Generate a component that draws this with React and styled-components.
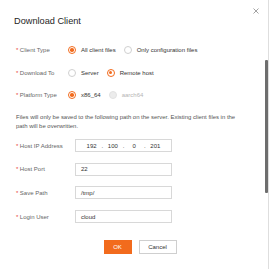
import React from 'react'
import styled, { createGlobalStyle } from 'styled-components'

const GlobalStyle = createGlobalStyle`
  body {
    margin: 0;
    background: #ffffff;
    font-family: "Liberation Sans", Arial, sans-serif;
  }
`

const ORANGE = '#f26b1d'

export default function App() {
  return (
    <>
      <GlobalStyle />
      <Dialog>
        <Content>
          <Header>
            <Title>Download Client</Title>
            <Close>
              <svg width="6" height="6" viewBox="0 0 6 6">
                <path d="M0.5 0.5 L5.5 5.5 M5.5 0.5 L0.5 5.5" stroke="#8a8a8a" strokeWidth="0.8" />
              </svg>
            </Close>
          </Header>

          <RadioRows>
            <Row>
              <Label $width={52}><Star>*</Star>Client Type</Label>
              <Option><Radio $checked />All client files</Option>
              <Option><Radio />Only configuration files</Option>
            </Row>
            <Row>
              <Label $width={52}><Star>*</Star>Download To</Label>
              <Option><Radio />Server</Option>
              <Option><Radio $checked />Remote host</Option>
            </Row>
            <Row>
              <Label $width={52}><Star>*</Star>Platform Type</Label>
              <Option><Radio $checked />x86_64</Option>
              <Option $disabled><Radio $disabled />aarch64</Option>
            </Row>
          </RadioRows>

          <Help>
            Files will only be saved to the following path on the server. Existing client files in the
            path will be overwritten.
          </Help>

          <InputRows>
            <Row>
              <Label $width={59}><Star>*</Star>Host IP Address</Label>
              <Input>
                <Seg>192</Seg><Dot>.</Dot>
                <Seg>100</Seg><Dot>.</Dot>
                <Seg>0</Seg><Dot>.</Dot>
                <Seg>201</Seg>
              </Input>
            </Row>
            <Row>
              <Label $width={59}><Star>*</Star>Host Port</Label>
              <Input>22</Input>
            </Row>
            <Row>
              <Label $width={59}><Star>*</Star>Save Path</Label>
              <Input>/tmp/</Input>
            </Row>
            <Row>
              <Label $width={59}><Star>*</Star>Login User</Label>
              <Input>cloud</Input>
            </Row>
          </InputRows>

          <Footer>
            <Button $primary>OK</Button>
            <Button>Cancel</Button>
          </Footer>
        </Content>
        <Track>
          <Thumb />
        </Track>
      </Dialog>
    </>
  )
}

const Dialog = styled.div`
  width: 269px;
  height: 269px;
  display: flex;
  background: #fff;
  overflow: hidden;
`

const Content = styled.div`
  flex: 1;
  padding: 0 0 0 16px;
  display: flex;
  flex-direction: column;
`

const Header = styled.div`
  display: flex;
  justify-content: space-between;
  align-items: flex-start;
  padding: 8px 5px 0 0;
`

const Title = styled.div`
  margin: 7px 0 0 -2px;
  font-size: 9.2px;
  line-height: 12px;
  color: #252525;
`

const Close = styled.div`
  width: 6px;
  height: 6px;
  display: flex;
`

const RadioRows = styled.div`
  display: flex;
  flex-direction: column;
  gap: 9.5px;
  margin-top: 16.5px;
`

const Row = styled.div`
  display: flex;
  align-items: center;
  height: 13px;
`

const Label = styled.div`
  width: ${p => p.$width}px;
  flex-shrink: 0;
  font-size: 6px;
  color: #666;
  white-space: nowrap;
`

const Star = styled.span`
  color: #e8433a;
  margin-right: 1.5px;
`

const Option = styled.div`
  display: flex;
  align-items: center;
  gap: 5px;
  margin-right: 8px;
  font-size: 6px;
  color: ${p => (p.$disabled ? '#b5b5b5' : '#333')};
  white-space: nowrap;
`

const Radio = styled.span`
  width: 8px;
  height: 8px;
  box-sizing: border-box;
  border-radius: 50%;
  border: 1px solid ${p => (p.$checked ? ORANGE : p.$disabled ? '#e2e2e2' : '#d0d0d0')};
  background: ${p => (p.$disabled ? '#ececec' : '#fff')};
  display: flex;
  align-items: center;
  justify-content: center;
  &::after {
    content: '';
    width: 3.5px;
    height: 3.5px;
    border-radius: 50%;
    background: ${p => (p.$checked ? ORANGE : 'transparent')};
  }
`

const Help = styled.div`
  margin-top: 11px;
  width: 226px;
  font-size: 5.95px;
  line-height: 9px;
  color: #555;
`

const InputRows = styled.div`
  display: flex;
  flex-direction: column;
  gap: 10.7px;
  margin-top: 8.5px;
`

const Input = styled.div`
  width: 97px;
  height: 13px;
  box-sizing: border-box;
  border: 1px solid #d8d8d8;
  display: flex;
  align-items: center;
  padding: 0 5px;
  font-size: 6px;
  color: #333;
`

const Seg = styled.span`
  flex: 1;
  text-align: center;
`

const Dot = styled.span`
  width: 0;
  display: flex;
  justify-content: center;
`

const Footer = styled.div`
  display: flex;
  gap: 7px;
  justify-content: center;
  margin-top: 17px;
`

const Button = styled.div`
  height: 14px;
  width: ${p => (p.$primary ? 28 : 38)}px;
  box-sizing: border-box;
  display: flex;
  align-items: center;
  justify-content: center;
  font-size: 6px;
  background: ${p => (p.$primary ? ORANGE : '#fff')};
  color: ${p => (p.$primary ? '#fff' : '#333')};
  border: 1px solid ${p => (p.$primary ? ORANGE : '#cfcfcf')};
`

const Track = styled.div`
  width: 5px;
  border-right: 1px solid #dedede;
  box-sizing: border-box;
  padding-top: 60px;
`

const Thumb = styled.div`
  width: 3px;
  margin-left: 1px;
  height: 133px;
  background: #6e6e6e;
  border-radius: 1px;
`
